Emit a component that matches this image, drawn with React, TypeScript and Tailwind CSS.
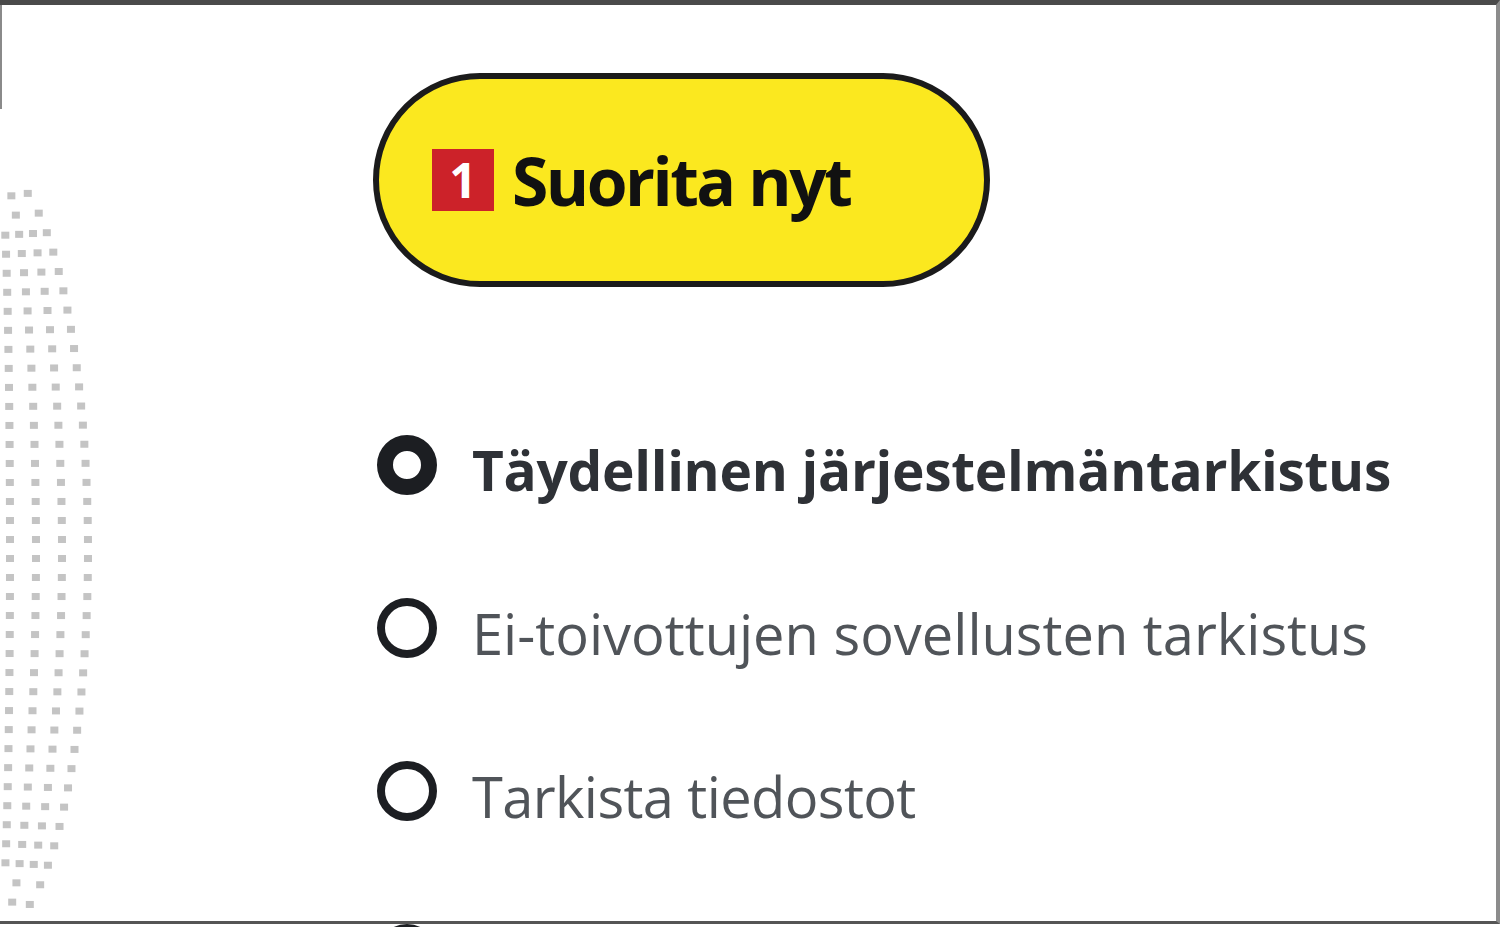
import React from 'react';

const rows = [
  {
    label: 'Täydellinen järjestelmäntarkistus',
    selected: true,
    cls: 'pt-[10px] text-[55px] font-bold leading-none tracking-[-0.3px] text-[#2e3136]',
  },
  {
    label: 'Ei-toivottujen sovellusten tarkistus',
    selected: false,
    cls: 'pt-[10px] text-[56px] leading-none tracking-[0px] text-[#505459]',
  },
  {
    label: 'Tarkista tiedostot',
    selected: false,
    cls: 'pt-[10px] text-[56px] leading-none tracking-[-0.6px] text-[#505459]',
  },
];

const HalftoneGlobe = () => {
  const dots: { x: number; y: number }[] = [];
  for (let y = 192; y <= 900; y += 19) {
    const t = (y - 545) / 372;
    const c = Math.sqrt(Math.max(0, 1 - t * t));
    let last = 999;
    [88, 62, 36, 10].forEach((X) => {
      const x = X * c;
      if (last - x >= 13 && x > -4) {
        dots.push({ x, y: y + (1 - c) * (X / 88) * 6 * Math.sign(t) });
        last = x;
      }
    });
  }
  return (
    <svg className="absolute left-0 top-0" width="110" height="927" viewBox="0 0 110 927">
      {dots.map((d, i) => (
        <rect key={i} x={d.x - 4} y={d.y - 3} width="8" height="7" fill="#c4c4c4" />
      ))}
    </svg>
  );
};

const Radio = ({ selected }: { selected: boolean }) => (
  <span
    className={
      selected
        ? 'block h-[60px] w-[60px] shrink-0 rounded-full border-[16px] border-[#1c1e22] bg-white'
        : 'block h-[60px] w-[60px] shrink-0 rounded-full border-[8px] border-[#1c1e22] bg-white'
    }
  />
);

export default function App() {
  return (
    <div className="relative h-[927px] w-[1500px] overflow-hidden bg-white font-['Open_Sans',sans-serif]">
      <div className="relative h-[924px] w-[1500px] border-t-[5px] border-r-[4px] border-b-[3px] border-t-[#4a4a4a] border-r-[#8c8c8c] border-b-[#555555]">
        <HalftoneGlobe />
        {/* partial left edge */}
        <div className="absolute left-0 top-0 h-[104px] w-[2px] bg-[#8a8a8a]" />

        <div className="flex flex-col pl-[373px] pt-[68px]">
          <button className="flex h-[214px] w-[617px] items-center rounded-full border-[6px] border-[#1b1b1b] bg-[#fbe81f] pl-[53px]">
            <span className="flex h-[62px] w-[62px] items-center justify-center bg-[#cc2229] text-[48px] font-bold leading-none text-white">
              1
            </span>
            <span className="ml-[18px] text-[66px] font-bold leading-none tracking-[-2.5px] text-[#111111]">
              Suorita nyt
            </span>
          </button>

          <div className="mt-[96px] flex flex-col pl-[4px]">
            {rows.map((r) => (
              <div key={r.label} className="flex h-[163px] items-center gap-[35px]">
                <Radio selected={r.selected} />
                <span className={r.cls}>{r.label}</span>
              </div>
            ))}
            <div className="flex h-[163px] items-center gap-[35px]">
              <Radio selected={false} />
            </div>
          </div>
        </div>
      </div>
    </div>
  );
}
